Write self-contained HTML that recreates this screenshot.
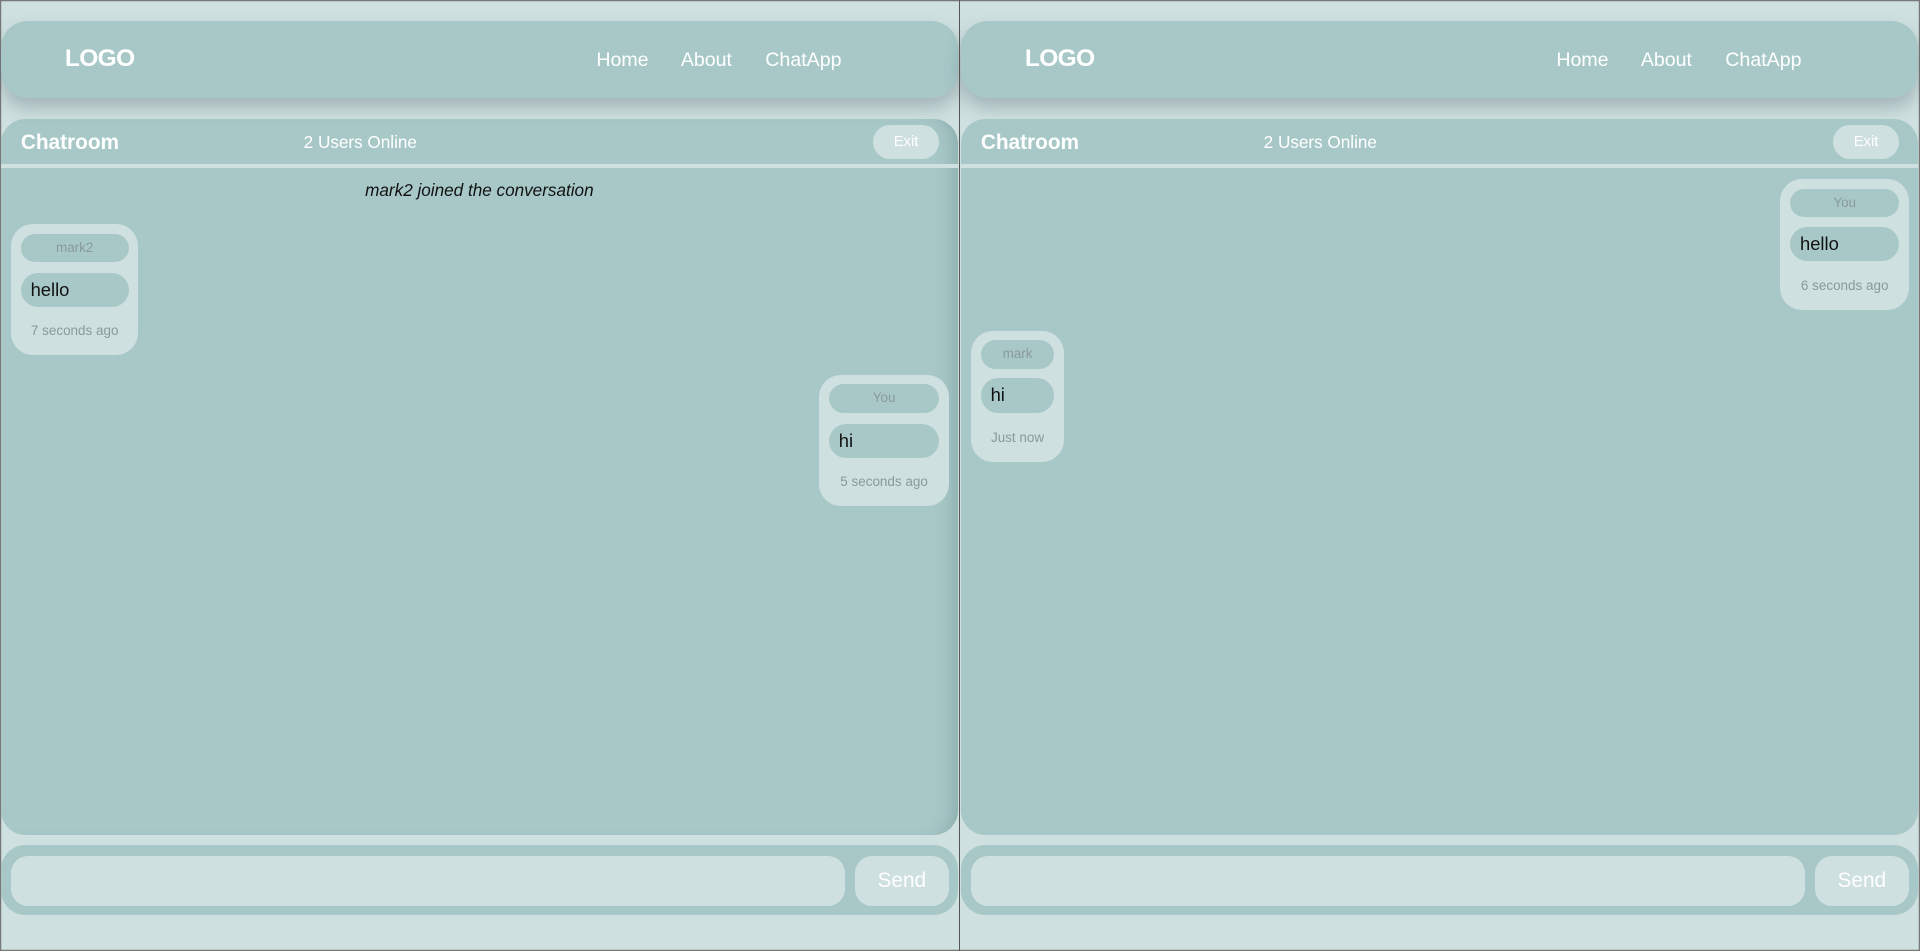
<!DOCTYPE html>
<html><head><meta charset="utf-8"><style>
*{margin:0;padding:0;box-sizing:border-box}
html,body{width:1920px;height:951px;overflow:hidden;background:#cfe0e0;font-family:"Liberation Sans",sans-serif}
#w{zoom:1.22449;position:relative;width:1568px;height:777px;background:#cfe0e0;box-shadow:inset 0 0 0 1px #777}
.p{position:absolute;top:0;width:783px;height:777px}
.a{position:absolute}
.nav{left:1px;top:17px;width:781px;height:63px;background:#a8c8c8;border-radius:22px;box-shadow:0 8px 14px rgba(80,100,110,.35)}
.w{color:#fff}
.chat{left:1px;top:97px;width:781px;height:585px;background:#a8c8c8;border-radius:20px}
.lt{background:#cfe0e0}
.bub{background:#cfe0e0;border-radius:18px}
.pill{background:#a8c8c8;border-radius:13px}
.nm{color:#8a9a9a;font-size:11px;text-align:center;line-height:23px}
.msg{font-size:15px;color:#111;line-height:28px;padding-left:8px}
.tm{color:#8a9a9a;font-size:11px;text-align:center}
</style></head><body><div id="w">
<div class="a" style="left:783px;top:0;width:1px;height:777px;background:#555;z-index:5"></div>

<!-- LEFT -->
<div class="p" style="left:0">
<div class="a nav"></div>
<div class="a w" style="left:53px;top:37px;font-size:20px;font-weight:bold;letter-spacing:-0.5px">LOGO</div>
<div class="a w" style="left:487px;top:40px;font-size:16px">Home</div>
<div class="a w" style="left:556px;top:40px;font-size:16px">About</div>
<div class="a w" style="left:625px;top:40px;font-size:16px">ChatApp</div>
<div class="a chat" style="box-shadow:inset -14px 0 14px -10px rgba(60,90,90,.25)"></div>
<div class="a w" style="left:17px;top:107px;font-size:17px;font-weight:bold">Chatroom</div>
<div class="a w" style="left:248px;top:108px;font-size:14px">2 Users Online</div>
<div class="a lt w" style="left:713px;top:102px;width:54px;height:28px;border-radius:14px;font-size:12px;text-align:center;line-height:28px">Exit</div>
<div class="a lt" style="left:1px;top:134px;width:781px;height:3px"></div>
<div class="a" style="left:0;width:783px;top:147px;text-align:center;font-size:14px;font-style:italic;color:#111">mark2 joined the conversation</div>
<div class="a bub" style="left:9px;top:183px;width:104px;height:107px"></div>
<div class="a pill nm" style="left:17px;top:191px;width:88px;height:23px">mark2</div>
<div class="a pill msg" style="left:17px;top:223px;width:88px;height:28px;border-radius:14px">hello</div>
<div class="a tm" style="left:9px;width:104px;top:264px">7 seconds ago</div>
<div class="a bub" style="left:669px;top:306px;width:106px;height:107px"></div>
<div class="a pill nm" style="left:677px;top:314px;width:90px;height:23px">You</div>
<div class="a pill msg" style="left:677px;top:346px;width:90px;height:28px;border-radius:14px">hi</div>
<div class="a tm" style="left:669px;width:106px;top:387px">5 seconds ago</div>
<div class="a" style="left:1px;top:690px;width:781px;height:57px;background:#a8c8c8;border-radius:20px"></div>
<div class="a lt" style="left:9px;top:699px;width:681px;height:41px;border-radius:14px"></div>
<div class="a lt w" style="left:698px;top:699px;width:77px;height:41px;border-radius:14px;font-size:17px;text-align:center;line-height:41px">Send</div>
</div>

<!-- RIGHT -->
<div class="p" style="left:784px">
<div class="a nav"></div>
<div class="a w" style="left:53px;top:37px;font-size:20px;font-weight:bold;letter-spacing:-0.5px">LOGO</div>
<div class="a w" style="left:487px;top:40px;font-size:16px">Home</div>
<div class="a w" style="left:556px;top:40px;font-size:16px">About</div>
<div class="a w" style="left:625px;top:40px;font-size:16px">ChatApp</div>
<div class="a chat"></div>
<div class="a w" style="left:17px;top:107px;font-size:17px;font-weight:bold">Chatroom</div>
<div class="a w" style="left:248px;top:108px;font-size:14px">2 Users Online</div>
<div class="a lt w" style="left:713px;top:102px;width:54px;height:28px;border-radius:14px;font-size:12px;text-align:center;line-height:28px">Exit</div>
<div class="a lt" style="left:1px;top:134px;width:781px;height:3px"></div>
<div class="a bub" style="left:670px;top:146px;width:105px;height:107px"></div>
<div class="a pill nm" style="left:678px;top:154px;width:89px;height:23px">You</div>
<div class="a pill msg" style="left:678px;top:185px;width:89px;height:28px;border-radius:14px">hello</div>
<div class="a tm" style="left:670px;width:105px;top:227px">6 seconds ago</div>
<div class="a bub" style="left:9px;top:270px;width:76px;height:107px"></div>
<div class="a pill nm" style="left:17px;top:278px;width:60px;height:23px">mark</div>
<div class="a pill msg" style="left:17px;top:309px;width:60px;height:28px;border-radius:14px">hi</div>
<div class="a tm" style="left:9px;width:76px;top:351px">Just now</div>
<div class="a" style="left:1px;top:690px;width:781px;height:57px;background:#a8c8c8;border-radius:20px"></div>
<div class="a lt" style="left:9px;top:699px;width:681px;height:41px;border-radius:14px"></div>
<div class="a lt w" style="left:698px;top:699px;width:77px;height:41px;border-radius:14px;font-size:17px;text-align:center;line-height:41px">Send</div>
</div>
</div></body></html>
